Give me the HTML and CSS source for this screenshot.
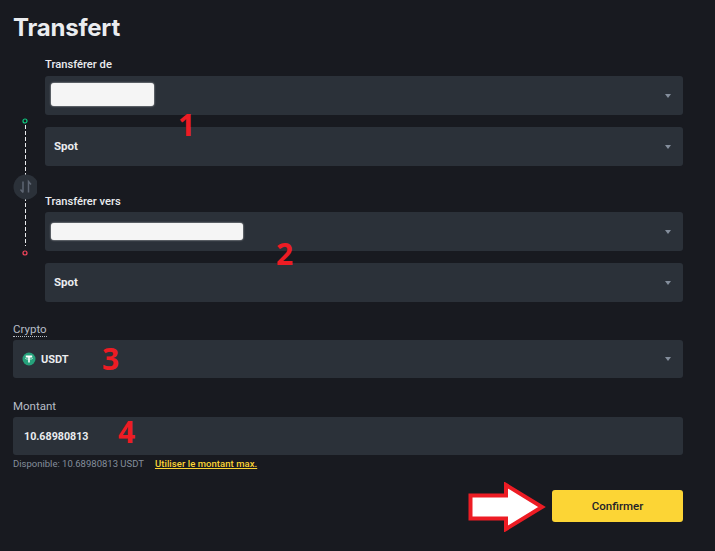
FILE: index.html
```html
<!DOCTYPE html>
<html lang="fr">

<head>
    <meta charset="UTF-8">
    <meta name="viewport" content="width=device-width, initial-scale=1.0">
    <title>Transfert</title>
    <link rel="stylesheet" href="styles.css">
</head>

<body>
    <main class="page">
        <h1 class="page-title">Transfert</h1>

        <div class="transfer">
            <!-- Ligne verticale entre les deux comptes -->
            <div class="rail">
                <svg class="rail-line" width="24" height="140" viewBox="0 0 24 140" aria-hidden="true">
                    <line x1="12.5" y1="9" x2="12.5" y2="130" stroke="#eaecef" stroke-width="1" stroke-dasharray="4 2" />
                    <circle cx="12" cy="5" r="2" fill="none" stroke="#0ecb81" stroke-width="1.2" />
                    <circle cx="12" cy="137" r="2" fill="none" stroke="#f6465d" stroke-width="1.2" />
                    <circle cx="13" cy="71" r="12.5" fill="#2b3139" />
                    <path d="M10 65.500v11M10 76.500l-2.500-3M15.500 76.500v-11l2.500 3" fill="none" stroke="#5e6673" stroke-width="1.500" />
                </svg>
            </div>

            <div class="accounts">
                <div class="field-group">
                    <label class="field-label">Transférer de</label>
                    <div class="select">
                        <span class="mask mask-short"></span>
                        <span class="caret"></span>
                    </div>
                    <div class="select">
                        <span class="select-text select-text-spot">Spot</span>
                        <span class="caret"></span>
                    </div>
                </div>

                <div class="field-group">
                    <label class="field-label">Transférer vers</label>
                    <div class="select select-to">
                        <span class="mask mask-long"></span>
                        <span class="caret"></span>
                    </div>
                    <div class="select">
                        <span class="select-text select-text-spot">Spot</span>
                        <span class="caret"></span>
                    </div>
                </div>
            </div>
        </div>

        <div class="coin-group">
            <label class="field-label field-label-muted"><span class="dotted">Crypto</span></label>
            <div class="select select-coin">
                <svg class="coin-icon" width="14" height="14" viewBox="0 0 14 14" aria-hidden="true">
                    <circle cx="7" cy="7" r="6.500" fill="#26a17b" />
                    <path d="M3.800 3.600h6.400v1.500H7.800v5.300H6.200V5.100H3.800z" fill="#fff" />
                    <ellipse cx="7" cy="6.300" rx="3.600" ry="0.900" fill="none" stroke="#fff" stroke-width="0.600" />
                </svg>
                <span class="select-text select-text-coin">USDT</span>
                <span class="caret"></span>
            </div>
        </div>

        <div class="amount-group">
            <label class="field-label field-label-muted">Montant</label>
            <div class="select select-amount">
                <span class="select-text select-text-amount">10.68980813</span>
            </div>
            <div class="hint">
                <span>Disponible: 10.68980813 USDT</span>
                <a class="max-link" href="#">Utiliser le montant max.</a>
            </div>
        </div>

        <div class="actions">
            <button type="button" class="btn-confirm">Confirmer</button>
        </div>
    </main>

    <!-- Annotations rouges par-dessus la capture -->
    <span class="note note-1">1</span>
    <span class="note note-2">2</span>
    <span class="note note-3">3</span>
    <span class="note note-4">4</span>
    <svg class="note-arrow" width="78" height="50" viewBox="0 0 78 50" aria-hidden="true">
        <path d="M2.500 13.500H38V3l36 22-36 22V36.500H2.500z" fill="#fff" stroke="#ed1c24" stroke-width="4" />
    </svg>
</body>

</html>
```

FILE: styles.css
```css
:root {
    --bg-color: #181a20;
    --field-bg: #2b3139;
    --text-color: #eaecef;
    --muted-color: #848e9c;
    --yellow: #fcd535;
    --note-red: #ed1c24;
}

* {
    box-sizing: border-box;
}

body {
    margin: 0;
    background-color: var(--bg-color);
    color: var(--text-color);
    font-family: Roboto, "Liberation Sans", sans-serif;
}

.page {
    height: 551px;
    padding: 13px 32px 0 13px;
    overflow: hidden;
}

.page-title {
    margin: 0;
    height: 30px;
    font-family: Inter, sans-serif;
    font-size: 24px;
    line-height: 30px;
    font-weight: 700;
    letter-spacing: -0.2px;
}

.transfer {
    display: flex;
    margin-top: 13px;
}

.rail {
    flex: none;
    width: 32px;
    padding-top: 60px;
}

.rail-line {
    display: block;
}

.accounts {
    flex: 1;
    display: flex;
    flex-direction: column;
    gap: 27px;
}

.field-group {
    display: flex;
    flex-direction: column;
}

.field-label {
    display: block;
    height: 16px;
    margin-bottom: 4px;
    font-size: 11.200px;
    line-height: 18px;
    font-weight: 500;
}

.field-label-muted {
    color: #b7bdc6;
    margin-bottom: 3px;
    font-size: 11.500px;
    line-height: 16px;
    font-weight: 400;
}

.dotted {
    border-bottom: 1px dotted #b7bdc6;
}

.select {
    display: flex;
    align-items: center;
    height: 39px;
    padding: 0 12px 0 10px;
    background-color: var(--field-bg);
    border-radius: 3px;
}

.select + .select {
    margin-top: 12px;
}

.select-to {
    margin-top: -1px;
}

.select-text {
    font-size: 11.500px;
    font-weight: 700;
}

.select-text-spot {
    margin: 0 0 2px -1px;
}

.select-text-coin {
    font-size: 11px;
}

.select-text-amount {
    font-size: 10.700px;
}

.caret {
    margin-left: auto;
    border-left: 3.500px solid transparent;
    border-right: 3.500px solid transparent;
    border-top: 4px solid var(--muted-color);
}

.mask {
    height: 23px;
    margin: 0 0 3px -4px;
    background-color: #f5f5f5;
    border-radius: 3px;
    box-shadow: 0 0 2px #ddd;
}

.mask-short {
    width: 103px;
}

.mask-long {
    width: 192px;
    height: 17px;
    margin-bottom: 1px;
}

.coin-group {
    margin-top: 19px;
}

.select-coin {
    height: 38px;
    padding-left: 9px;
}

.coin-icon {
    margin-right: 5px;
}

.amount-group {
    margin-top: 20px;
}

.select-amount {
    height: 38px;
    padding-left: 11px;
}

.hint {
    display: flex;
    gap: 11px;
    margin-top: 3px;
    height: 12px;
    font-size: 9.500px;
    line-height: 12px;
    color: var(--muted-color);
}

.max-link {
    color: var(--yellow);
    font-weight: 500;
    letter-spacing: 0.05px;
    text-decoration: underline;
}

.actions {
    display: flex;
    justify-content: flex-end;
    margin-top: 20px;
}

.btn-confirm {
    width: 131px;
    height: 32px;
    border: none;
    border-radius: 3px;
    background-color: var(--yellow);
    color: #1e2329;
    font-family: inherit;
    font-size: 11.500px;
    font-weight: 500;
}

.note {
    position: absolute;
    color: var(--note-red);
    font-family: "Open Sans", sans-serif;
    font-size: 30px;
    line-height: 30px;
    font-weight: 700;
}

.note-1 {
    left: 178px;
    top: 110px;
}

.note-2 {
    left: 276px;
    top: 239px;
}

.note-3 {
    left: 102px;
    top: 344px;
}

.note-4 {
    left: 118px;
    top: 417px;
}

.note-arrow {
    position: absolute;
    left: 468px;
    top: 482px;
}
```
